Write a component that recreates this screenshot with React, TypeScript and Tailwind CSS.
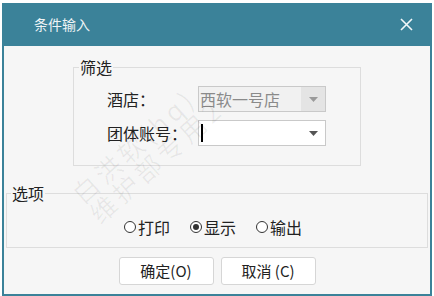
import { useState } from 'react'

const font = { fontFamily: '"Noto Sans CJK SC", "Noto Sans", sans-serif' }

function Caret({ dim }: { dim?: boolean }) {
  return (
    <svg width="9" height="5" viewBox="0 0 9 5">
      <path d="M0 0h9L4.5 5z" fill={dim ? '#9a9a9a' : '#555'} />
    </svg>
  )
}

function Radio({ checked, label, onClick }: { checked: boolean; label: string; onClick: () => void }) {
  return (
    <button className="flex items-center gap-[2px] text-[16px] text-[#222]" onClick={onClick} type="button">
      <span className="flex h-[12px] w-[12px] items-center justify-center rounded-full border border-[#333] bg-white">
        {checked && <span className="h-[6px] w-[6px] rounded-full bg-[#333]" />}
      </span>
      <span className="leading-none">{label}</span>
    </button>
  )
}

export default function App() {
  const [mode, setMode] = useState('show')

  return (
    <div className="h-[296px] w-[434px] bg-white pt-[3px] pl-[2px]" style={font}>
      <div className="relative flex h-[293px] w-[430px] flex-col overflow-hidden border-2 border-t-0 border-[#3b8299] bg-[#f6f6f6]">
        <div className="flex h-[43px] shrink-0 items-center justify-between bg-[#3b8299] pr-[17px] pl-[30px]">
          <span className="text-[14px] text-[#eef4f6]">条件输入</span>
          <svg width="13" height="13" viewBox="0 0 13 13">
            <path d="M1 1l11 11M12 1L1 12" stroke="#f2f7f9" strokeWidth="1.6" />
          </svg>
        </div>

        <fieldset className="mt-[11px] ml-[69px] h-[109px] w-[288px] border border-[#dddddd]">
          <legend className="ml-[5px] px-[1px] text-[16px] leading-[20px] text-[#222]">筛选</legend>
          <div className="pt-[9px] pl-[33px]">
            <div className="flex items-center">
              <span className="w-[91px] text-[16px] text-[#222]">酒店：</span>
              <div className="flex h-[26px] w-[128px] items-center border border-[#c9c9c9] bg-[#f1f1f1]">
                <span className="flex-1 pl-[1px] text-[16px] leading-none text-[#8a8a8a]">西软一号店</span>
                <span className="flex h-full w-[24px] items-center justify-center bg-[#e4e4e4]">
                  <Caret dim />
                </span>
              </div>
            </div>
            <div className="mt-[8px] flex items-center">
              <span className="w-[91px] text-[16px] text-[#222]">团体账号：</span>
              <div className="flex h-[26px] w-[128px] items-center border border-[#c9c9c9] bg-white">
                <span className="ml-[2px] h-[18px] w-[1.5px] bg-black" />
                <span className="flex-1" />
                <span className="flex w-[24px] items-center justify-center">
                  <Caret />
                </span>
              </div>
            </div>
          </div>
        </fieldset>

        <fieldset className="mt-[17px] ml-[2px] h-[65px] w-[422px] border border-[#dddddd]">
          <legend className="ml-[4px] px-[1px] text-[16px] leading-[20px] text-[#222]">选项</legend>
          <div className="mt-[16px] flex justify-center gap-[20px] pr-[8px]">
            <Radio checked={mode === 'print'} label="打印" onClick={() => setMode('print')} />
            <Radio checked={mode === 'show'} label="显示" onClick={() => setMode('show')} />
            <Radio checked={mode === 'out'} label="输出" onClick={() => setMode('out')} />
          </div>
        </fieldset>

        <div className="mt-[9px] flex justify-center gap-[7px]">
          <button className="h-[28px] w-[95px] rounded-[3px] border border-[#d6d6d6] bg-white text-[15px] text-[#222]" type="button">
            确定(O)
          </button>
          <button className="h-[28px] w-[95px] rounded-[3px] border border-[#d6d6d6] bg-white text-[15px] text-[#222]" type="button">
            取消 (C)
          </button>
        </div>

        <div className="pointer-events-none absolute top-[185px] left-[63px] origin-top-left -rotate-[42deg] text-[26px] leading-[26px] tracking-[4px] whitespace-nowrap text-[#000]/[0.06]">
          <div>白洪软(hq)</div>
          <div>维护部专用2</div>
        </div>
      </div>
    </div>
  )
}
